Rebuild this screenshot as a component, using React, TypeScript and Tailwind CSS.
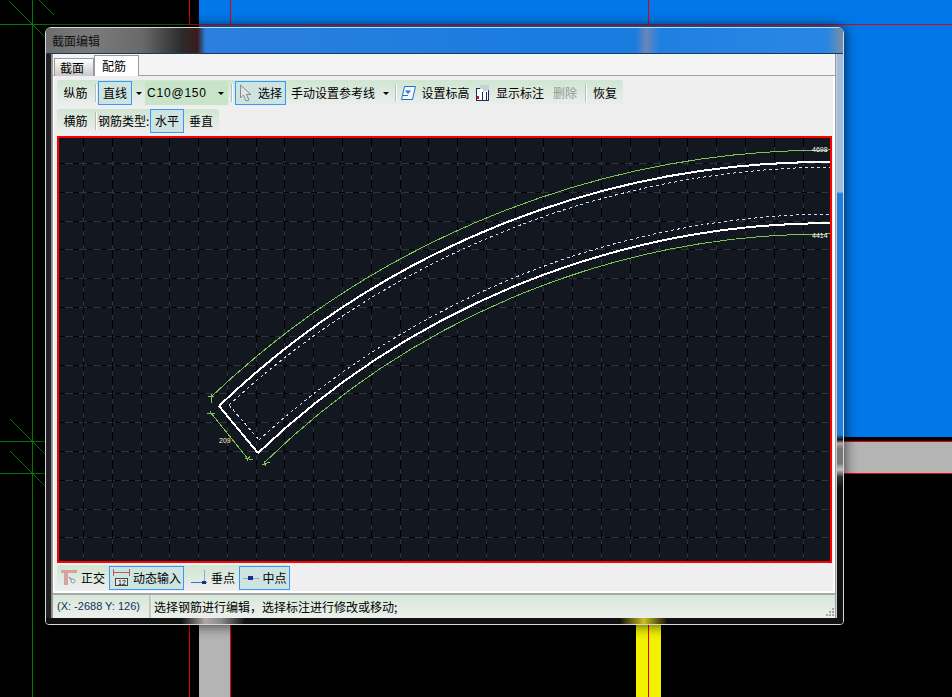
const cjk = "font-['Noto_Sans_CJK_SC','Liberation_Sans',sans-serif]"

const rows = Array.from({ length: 15 }, (_, i) => 163.5 + i * 28.8)
const cols = Array.from({ length: 27 }, (_, i) => 83.5 + i * 28.78)

function Backdrop() {
    return (
        <svg className="absolute left-0 top-0" width="952" height="697" shapeRendering="crispEdges">
            <rect x="199" y="0" width="753" height="437" fill="#0078ea" />
            <rect x="843" y="441" width="109" height="32" fill="#b4b4b4" />
            <rect x="199" y="620" width="31" height="77" fill="#b4b4b4" />
            <rect x="636" y="620" width="25" height="77" fill="#f2f200" />
            <path d="M189.5 0V24M230.5 0V24M648.5 0V24M189 24.5H952M843 441.5H952M843 473.5H952M189.5 620V697M230.5 620V697M648.5 620V697" stroke="#e80000" fill="none" />
            <path d="M0 24.5H189M32.5 0V697M0 441.5H46M0 473.5H46" stroke="#007a00" fill="none" />
            <path d="M10 2L46 38M39 0L54 15M10 419L46 455M10 451L46 487" stroke="#007a00" fill="none" />
        </svg>
    )
}

function Sep({ className }: { className?: string }) {
    return <div className={`w-[2px] h-[18px] bg-[#b9bfb9] border-r border-white shrink-0 ${className ?? ""}`} />
}

function Btn({ on, w, children }: { on?: boolean; w: string; children: React.ReactNode }) {
    return (
        <div className={`h-[24px] flex items-center justify-center shrink-0 text-[12px] text-black whitespace-nowrap border ${on ? "border-[#3399ff] bg-[#cde4e0]" : "border-transparent"} ${w}`}>
            {children}
        </div>
    )
}

function Caret() {
    return <div className="w-0 h-0 border-x-[3px] border-x-transparent border-t-[3px] border-t-black shrink-0" />
}

function Bar({ children, className }: { children: React.ReactNode; className?: string }) {
    return (
        <div className={`flex items-center shrink-0 rounded-[3px] bg-gradient-to-b from-[#cfe6d2] to-[#eeeeee] ${className ?? ""}`}>
            {children}
        </div>
    )
}

function Drawing() {
    return (
        <svg className="block" width="771" height="423" viewBox="59 138 771 423">
            <rect x="59" y="138" width="771" height="423" fill="#13171f" />
            <g stroke="#2e333d" shapeRendering="crispEdges">
                {rows.map((y) => <line key={y} x1="59" x2="830" y1={y} y2={y} />)}
                {cols.map((x) => <line key={x} y1="138" y2="561" x1={x} x2={x} />)}
            </g>
            <g stroke="#000000" shapeRendering="crispEdges">
                {rows.map((y) => <line key={y} x1="59" x2="830" y1={y} y2={y} strokeDasharray="6 8" />)}
                {cols.map((x) => <line key={x} y1="138" y2="561" x1={x} x2={x} strokeDasharray="9 5" />)}
            </g>
            <g fill="none" shapeRendering="crispEdges">
                <path d="M212 396A896 896 0 0 1 830 150" stroke="#7cc35a" />
                <path d="M265 462A803 803 0 0 1 830 234" stroke="#7cc35a" />
                <path d="M211 413L248 459" stroke="#7cc35a" />
                <path d="M208 396L214 397M211 394L212 403M207 414L215 413M210 411L212 415M245 458L253 460M247 461L250 456M262 465L270 462M264 461L266 466" stroke="#7cc35a" />
                <path d="M229 405A899 899 0 0 1 830 167" stroke="#c4dff8" strokeDasharray="3 3" />
                <path d="M259 440A855 855 0 0 1 830 214" stroke="#c4dff8" strokeDasharray="3 3" />
                <path d="M229 405L259 440" stroke="#c4dff8" strokeDasharray="3 3" />
                <path d="M219 406A878 878 0 0 1 830 162" stroke="#ffffff" strokeWidth="2" />
                <path d="M258 453A833 833 0 0 1 830 223" stroke="#ffffff" strokeWidth="2" />
                <path d="M219 406L258 453" stroke="#ffffff" strokeWidth="2" />
            </g>
            <text x="219" y="443" fontSize="7" fill="#fff3c8" fontFamily="Liberation Sans">209</text>
            <text x="812" y="152" fontSize="7" fill="#ffffff" fontFamily="Liberation Sans">4698</text>
            <text x="812" y="238" fontSize="7" fill="#ffffff" fontFamily="Liberation Sans">4414</text>
        </svg>
    )
}

function ArrowIcon() {
    return (
        <svg width="13" height="18" viewBox="0 0 13 18">
            <path d="M1.5 1V14L4.5 11L7 17L10 16L7.5 10.5H12Z" fill="#dfe3e3" stroke="#8a8a8a" />
        </svg>
    )
}

function LevelIcon() {
    return (
        <svg width="17" height="16" viewBox="0 0 17 16">
            <path d="M4.5 1.5H15.5L12.5 14.5H1.5Z" fill="#f4f8fb" stroke="#1d74c4" />
            <path d="M5 5.5H11L8 9Z" fill="#1d74c4" />
            <path d="M3 10.5H8" stroke="#1d74c4" />
        </svg>
    )
}

function NoteIcon() {
    return (
        <svg width="16" height="18" viewBox="0 0 16 18" shapeRendering="crispEdges">
            <rect x="1.5" y="4.5" width="12" height="12" fill="#fff" stroke="#12305c" />
            <path d="M7.5 8V16M11.5 8V16" stroke="#12305c" />
            <rect x="2" y="12" width="2" height="3" fill="#d01818" />
            <path d="M5 1H14V6L8 8V5H5Z" fill="#c8d0d8" shapeRendering="auto" />
        </svg>
    )
}

function OrthoIcon() {
    return (
        <svg width="18" height="17" viewBox="0 0 18 17" className="shrink-0">
            <path d="M0 1H16V4H7V16H3V4H0Z" fill="#d8a0a0" />
            <path d="M8 8L13 13" stroke="#8a9aa8" strokeWidth="1.5" />
            <circle cx="12" cy="12" r="2" fill="#eef2f5" stroke="#8a9aa8" />
        </svg>
    )
}

function InputIcon() {
    return (
        <svg width="18" height="18" viewBox="0 0 18 18" className="shrink-0 mr-[3px]" shapeRendering="crispEdges">
            <path d="M1 0V7M17 0V7M1 3.5H17" stroke="#b85a5a" fill="none" />
            <rect x="3.5" y="9.5" width="12" height="7" fill="#e8e8e8" stroke="#444" />
            <text x="6" y="16" fontSize="7" fill="#000" fontFamily="Liberation Sans">12</text>
        </svg>
    )
}

function PerpIcon() {
    return (
        <svg width="16" height="16" viewBox="0 0 16 16" className="shrink-0" shapeRendering="crispEdges">
            <path d="M0 12.5H16" stroke="#3a72c0" />
            <path d="M13.5 0V13" stroke="#8aa8d8" />
            <rect x="11" y="11" width="4" height="3" fill="#12308c" />
        </svg>
    )
}

function MidIcon() {
    return (
        <svg width="16" height="8" viewBox="0 0 16 8" className="shrink-0 mr-[4px]" shapeRendering="crispEdges">
            <path d="M0 4.5H16" stroke="#8aa8d8" />
            <rect x="5" y="2" width="5" height="4" fill="#12308c" />
        </svg>
    )
}

function Grip() {
    const on = [2, 4, 5, 6, 7, 8]
    return (
        <div className="absolute right-[1px] bottom-[2px] grid grid-cols-3 gap-[1px]">
            {Array.from({ length: 9 }, (_, i) => (
                <span key={i} className={`w-[2px] h-[2px] ${on.includes(i) ? "bg-[#a0a8a4]" : ""}`} />
            ))}
        </div>
    )
}

export default function App() {
    return (
        <div className={`relative w-[952px] h-[697px] overflow-hidden bg-black ${cjk}`}>
            <Backdrop />

            {/* dialog */}
            <div className="absolute left-[45px] top-[27px] w-[799px] h-[598px] flex flex-col rounded-t-[6px] rounded-b-[4px] border border-[#d8d8d8] overflow-hidden bg-[#111] shadow-[0_0_14px_rgba(0,0,0,0.75)]">
                <div className="h-[26px] shrink-0 flex items-center pl-[6px] text-[12px] text-[#111] border-b border-[#1a3a5c] bg-[linear-gradient(90deg,#6e6e6e_0%,#7a7a7a_6%,#6a6a6a_12%,#2c2c2c_17%,#3a1c1c_19%,#2c7fdc_20%,#1b7ce0_60%,#1b7ce0_74%,#6a86b8_75.3%,#1f80e2_77%,#2a86e4_98%,#7a8fa8_100%)]">
                    截面编辑
                </div>

                <div className="flex-1 flex min-h-0">
                    <div className="w-[6px] shrink-0 bg-[#222] border-r border-[#8c8c8c]" />

                    <div className="w-[784px] shrink-0 flex flex-col border-x border-[#9a9a9a] bg-white">
                        {/* tabs */}
                        <div className="h-[22px] shrink-0 flex items-end bg-[#f4f4f4] border-b border-[#a0a0a0] pl-[1px] text-[12px]">
                            <div className="w-[40px] h-[18px] flex items-center justify-center pr-[4px] bg-gradient-to-b from-white to-[#c8c8c8] border border-[#9a9a9a] border-b-0 -mb-px">截面</div>
                            <div className="w-[45px] h-[21px] flex items-center justify-center pr-[5px] bg-white border border-[#9a9a9a] border-b-0 -mb-px z-10">配筋</div>
                        </div>

                        <div className="flex-1 flex flex-col bg-[#efefef] border-l border-r-2 border-white border-b-2 pl-[3px] pr-[1px] pt-[4px] min-h-0">
                            <Bar className="w-[566px] h-[26px] px-[1px]">
                                <Btn w="w-[35px]">纵筋</Btn>
                                <Sep className="ml-[2px] mr-[1px]" />
                                <Btn on w="w-[34px]">直线</Btn>
                                <div className="w-[13px] flex justify-center"><Caret /></div>
                                <div className="w-[83px] h-[24px] flex items-center justify-between pl-[2px] pr-[4px] bg-[#c8e4c8] text-[12px] font-['Liberation_Sans'] tracking-[0.8px]">
                                    C10@150
                                    <Caret />
                                </div>
                                <Sep className="ml-[3px] mr-[2px]" />
                                <Btn on w="w-[51px] gap-[6px]"><ArrowIcon />选择</Btn>
                                <Btn w="w-[94px]">手动设置参考线</Btn>
                                <div className="w-[12px] flex justify-center"><Caret /></div>
                                <Sep className="ml-[3px] mr-[1px]" />
                                <Btn w="w-[74px] gap-[4px]"><LevelIcon />设置标高</Btn>
                                <Btn w="w-[75px] gap-[5px]"><NoteIcon />显示标注</Btn>
                                <Btn w="w-[36px]"><span className="text-[#8f9a94]">删除</span></Btn>
                                <Sep className="ml-[2px] mr-[1px]" />
                                <Btn w="w-[34px]">恢复</Btn>
                            </Bar>

                            <Bar className="w-[162px] h-[24px] mt-[3px] px-[1px]">
                                <Btn w="w-[35px]">横筋</Btn>
                                <Sep className="ml-[2px]" />
                                <span className="text-[12px] ml-[1px] w-[52px] shrink-0 whitespace-nowrap">钢筋类型:</span>
                                <Btn on w="w-[34px]">水平</Btn>
                                <Btn w="w-[34px]">垂直</Btn>
                            </Bar>

                            <div className="w-[775px] h-[427px] mt-[3px] border-2 border-[#ff0000] shrink-0">
                                <Drawing />
                            </div>

                            <div className="flex mt-[2px]">
                                <Bar className="w-[130px] h-[25px] pl-[4px]">
                                    <OrthoIcon />
                                    <span className="text-[12px] ml-[2px] mr-[4px] whitespace-nowrap">正交</span>
                                    <Btn on w="w-[75px]"><InputIcon />动态输入</Btn>
                                </Bar>
                                <Bar className="w-[103px] h-[25px] pl-[4px]">
                                    <PerpIcon />
                                    <span className="text-[12px] ml-[4px] mr-[4px] whitespace-nowrap">垂点</span>
                                    <Btn on w="w-[51px]"><MidIcon />中点</Btn>
                                </Bar>
                            </div>
                        </div>

                        {/* status bar */}
                        <div className="h-[25px] shrink-0 flex items-stretch border-t-2 border-[#a8a8a8] bg-[#f4f4f4] text-[12px]">
                            <div className="w-[96px] flex items-center pl-[4px] bg-gradient-to-b from-[#d6e8d8] to-[#ecefec] font-['Liberation_Sans'] text-[#14305c] text-[11px] whitespace-nowrap">(X: -2688 Y: 126)</div>
                            <div className="w-[3px] bg-[#c4c8c4] border-r border-[#eef0ee]" />
                            <div className="flex-1 relative flex items-center pl-[2px] bg-gradient-to-b from-[#d6e8d8] to-[#ecefec]">
                                选择钢筋进行编辑，选择标注进行修改或移动;
                                <Grip />
                            </div>
                        </div>
                    </div>

                    <div className="w-[7px] shrink-0 border-l border-[#cfcfcf] bg-[linear-gradient(180deg,#9fbde0_0%,#9fbde0_24.4%,#1f7fdf_24.8%,#1f7fdf_67.5%,#111_68.4%,#b4a8a8_69%,#777_70%,#777_72.5%,#c0c0c0_73.7%,#333_75%,#111_77%,#111_100%)]" />
                </div>

                <div className="h-[6px] shrink-0 bg-[linear-gradient(90deg,#111_17%,#b0a8a8_20%,#888_22%,#111_25%,#111_72%,#c8c020_75%,#111_78%)]" />
            </div>
        </div>
    )
}
